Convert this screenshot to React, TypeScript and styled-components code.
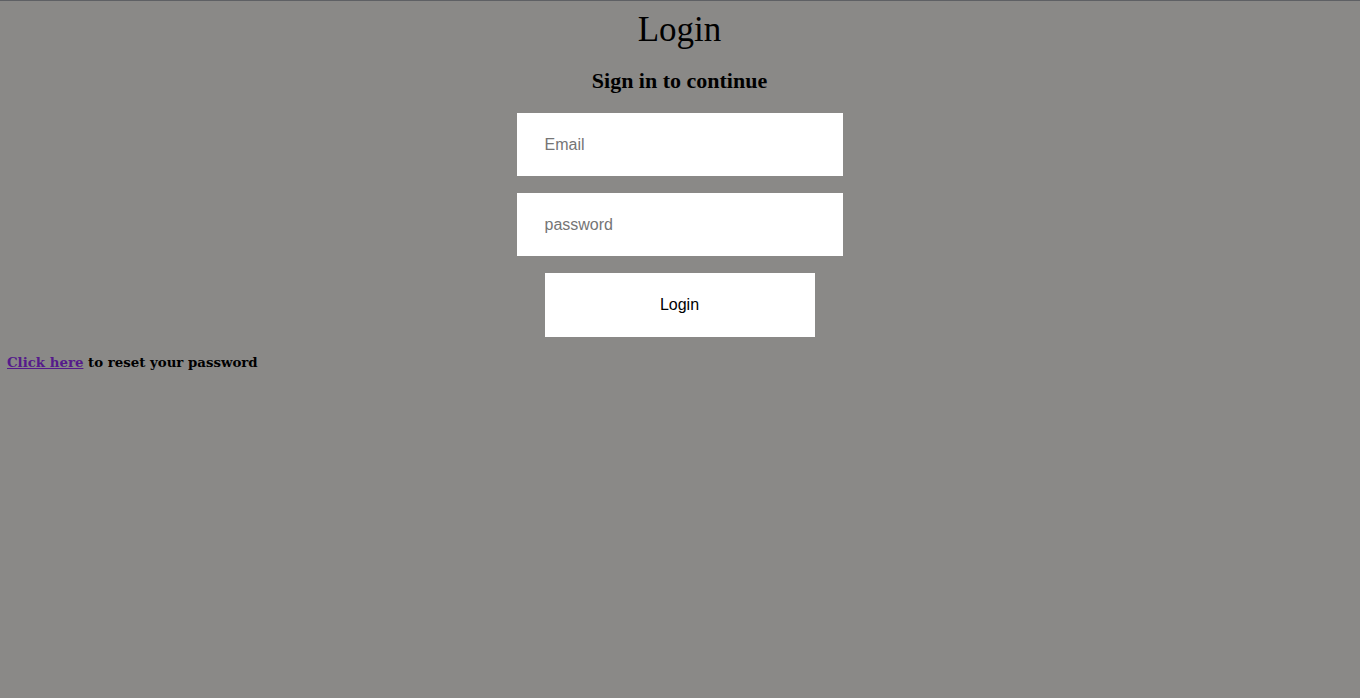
import { createGlobalStyle, styled } from 'styled-components';

const GlobalStyle = createGlobalStyle`
  html, body {
    margin: 0;
    padding: 0;
    background: #8a8987;
  }
  body {
    border-top: 1px solid #5e6064;
    min-height: 698px;
    box-sizing: border-box;
  }
`;

const Page = styled.div`
  padding: 7px 8px 0 7px;
  display: flex;
  flex-direction: column;
`;

const LoginBox = styled.div`
  display: flex;
  flex-direction: column;
  align-items: center;
`;

const Title = styled.h1`
  margin: 2px 0 0;
  font-family: 'Liberation Serif', 'Times New Roman', serif;
  font-weight: 400;
  font-size: 35px;
  line-height: 40px;
  color: #000;
`;

const Subtitle = styled.h2`
  margin: 18px 0 20px;
  font-family: 'Liberation Serif', 'Times New Roman', serif;
  font-weight: 700;
  font-size: 22px;
  line-height: 25px;
  color: #000;
`;

const Form = styled.form`
  display: flex;
  flex-direction: column;
  align-items: center;
  gap: 17px;
`;

const Input = styled.input`
  box-sizing: border-box;
  width: 326px;
  height: 63px;
  border: none;
  outline: none;
  background: #fff;
  padding: 0 28px;
  font-family: 'Liberation Sans', Arial, sans-serif;
  font-size: 16px;
  color: #000;
  &::placeholder {
    color: #757575;
  }
`;

const Button = styled.button`
  box-sizing: border-box;
  width: 270px;
  height: 64px;
  border: none;
  background: #fff;
  font-family: 'Liberation Sans', Arial, sans-serif;
  font-size: 16px;
  color: #000;
  cursor: pointer;
`;

const ResetLine = styled.p`
  margin: 17px 0 0;
  font-family: 'DejaVu Serif', serif;
  font-weight: 700;
  font-size: 13.33px;
  line-height: 17px;
  color: #000;
`;

const Link = styled.a`
  color: #551a8b;
  text-decoration: underline;
`;

export default function App() {
  return (
    <>
      <GlobalStyle />
      <Page>
        <LoginBox>
          <Title>Login</Title>
          <Subtitle>Sign in to continue</Subtitle>
          <Form onSubmit={(e) => e.preventDefault()}>
            <Input type="email" placeholder="Email" />
            <Input type="password" placeholder="password" />
            <Button type="submit">Login</Button>
          </Form>
        </LoginBox>
        <ResetLine>
          <Link href="#">Click here</Link> to reset your password
        </ResetLine>
      </Page>
    </>
  );
}
